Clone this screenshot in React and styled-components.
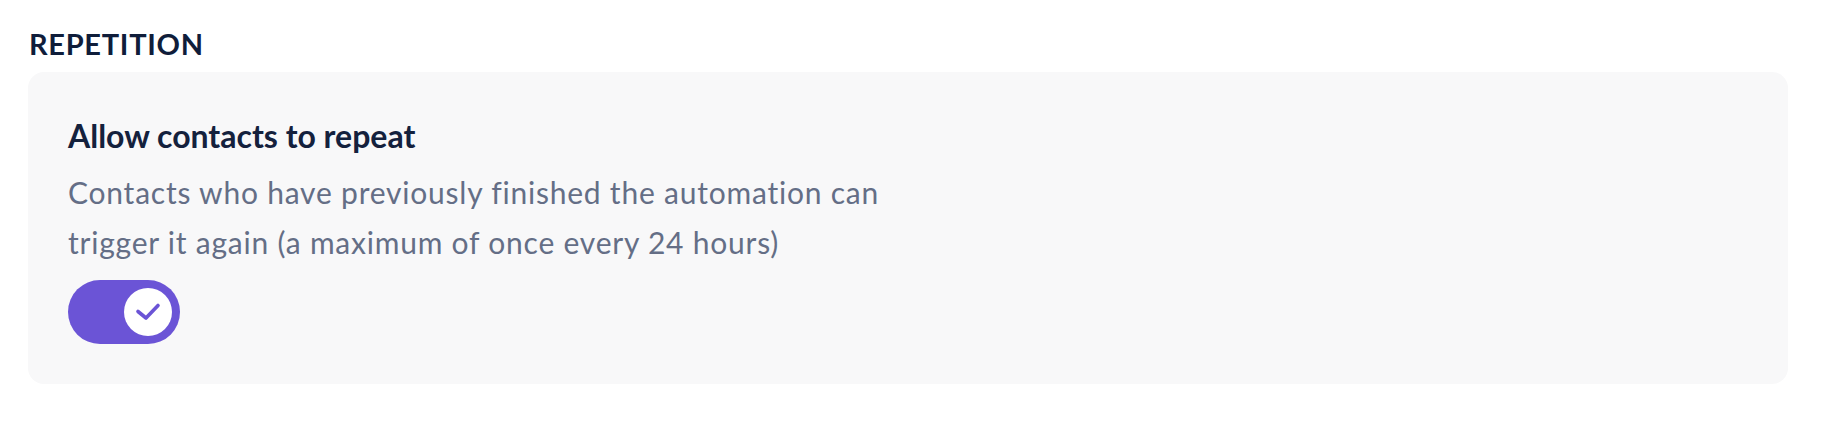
import React, { useState } from 'react';
import styled, { createGlobalStyle } from 'styled-components';

const GlobalStyle = createGlobalStyle`
  html, body {
    margin: 0;
    padding: 0;
    background: #ffffff;
  }
  body {
    font-family: 'Lato', 'Open Sans', sans-serif;
    -webkit-font-smoothing: antialiased;
  }
`;

const Page = styled.div`
  padding: 24px 34px 40px 28px;
`;

const SectionTitle = styled.h2`
  margin: 0 0 8px 1px;
  font-size: 29px;
  line-height: 40px;
  font-weight: 700;
  letter-spacing: 0.7px;
  text-transform: uppercase;
  color: #0f1d3a;
`;

const Card = styled.div`
  background-color: #f8f8f9;
  border-radius: 16px;
  padding: 40px;
  display: flex;
  flex-direction: column;
  align-items: flex-start;
`;

const OptionTitle = styled.h3`
  margin: 0;
  font-size: 32px;
  line-height: 48px;
  font-weight: 700;
  color: #14213d;
`;

const OptionText = styled.p`
  margin: 7px 0 0 0;
  max-width: 860px;
  font-size: 30px;
  line-height: 50px;
  letter-spacing: 0.78px;
  font-weight: 400;
  color: #646e86;
`;

const Track = styled.button`
  margin-top: 13px;
  width: 112px;
  height: 64px;
  border: none;
  border-radius: 32px;
  padding: 8px;
  display: flex;
  align-items: center;
  justify-content: ${props => (props.on ? 'flex-end' : 'flex-start')};
  background-color: ${props => (props.on ? '#6b54d6' : '#c9cbd3')};
  cursor: pointer;
`;

const Knob = styled.span`
  width: 48px;
  height: 48px;
  border-radius: 50%;
  background-color: #ffffff;
  display: flex;
  align-items: center;
  justify-content: center;
`;

function CheckIcon() {
  return (
    <svg width="48" height="48" viewBox="0 0 48 48" fill="none">
      <polyline
        points="14,23.5 22,30 34,17.5"
        stroke="#6b54d6"
        strokeWidth="3.6"
        strokeLinecap="round"
        strokeLinejoin="round"
      />
    </svg>
  );
}

function App() {
  const [repeat, setRepeat] = useState(true);

  return (
    <Page>
      <GlobalStyle />
      <SectionTitle>Repetition</SectionTitle>
      <Card>
        <OptionTitle>Allow contacts to repeat</OptionTitle>
        <OptionText>
          Contacts who have previously finished the automation can trigger it again (a maximum of once every 24 hours)
        </OptionText>
        <Track on={repeat} onClick={() => setRepeat(!repeat)} aria-pressed={repeat}>
          <Knob>{repeat && <CheckIcon />}</Knob>
        </Track>
      </Card>
    </Page>
  );
}

export default App;
